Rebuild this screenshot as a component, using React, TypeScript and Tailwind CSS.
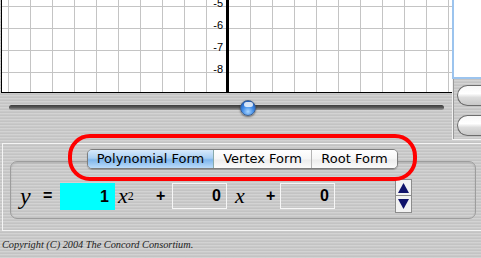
import React from "react";

const metal =
  "bg-[#c9c9c9] bg-[repeating-linear-gradient(0deg,rgba(255,255,255,0.18)_0px,rgba(255,255,255,0.18)_1px,rgba(0,0,0,0.03)_1px,rgba(0,0,0,0.03)_2px,transparent_2px,transparent_3px)]";

function Graph() {
  const vLines = Array.from({ length: 21 }, (_, i) => 6 + i * 22);
  const hLines = [6, 28, 50, 72];
  const labels = ["-5", "-6", "-7", "-8"];
  return (
    <svg width="450" height="92" className="block bg-white">
      {vLines.map((x) => (
        <line key={x} x1={x + 0.5} y1={0} x2={x + 0.5} y2={92} stroke="#c4c4c4" />
      ))}
      {hLines.map((y) => (
        <line key={y} x1={0} y1={y + 0.5} x2={450} y2={y + 0.5} stroke="#c4c4c4" />
      ))}
      <rect x={224} y={0} width={3} height={92} fill="#000" />
      {labels.map((t, i) => (
        <text
          key={t}
          x={221}
          y={hLines[i] + 1}
          textAnchor="end"
          fontFamily="Liberation Sans, Arial, sans-serif"
          fontSize="11"
          fill="#000"
        >
          {t}
        </text>
      ))}
    </svg>
  );
}

function Segmented() {
  const seg = "flex items-center justify-center h-full text-[13px] text-black";
  return (
    <div className="flex h-[20px] w-[311px] rounded-[5px] border border-[#7d7d7d] overflow-hidden shadow-[0_1px_1px_rgba(0,0,0,0.25)] [font-family:'DejaVu_Sans',sans-serif]">
      <div className={`${seg} w-[126px] bg-[linear-gradient(180deg,#d7e9fb_0%,#a9cff3_45%,#7fb6ec_55%,#bcdcfa_100%)] border-r border-[#8aa]`}>
        Polynomial Form
      </div>
      <div className={`${seg} w-[98px] bg-[linear-gradient(180deg,#ffffff_0%,#f6f6f6_50%,#ececec_55%,#fbfbfb_100%)] border-r border-[#b5b5b5]`}>
        Vertex Form
      </div>
      <div className={`${seg} flex-1 bg-[linear-gradient(180deg,#ffffff_0%,#f6f6f6_50%,#ececec_55%,#fbfbfb_100%)]`}>
        Root Form
      </div>
    </div>
  );
}

export default function App() {
  const num = "[font-family:'Liberation_Sans',Arial,sans-serif] font-bold text-[16px]";
  const varFont = "[font-family:'Liberation_Serif','Times_New_Roman',serif] italic";
  return (
    <div className={`relative w-[481px] h-[258px] overflow-hidden ${metal}`}>
      {/* top: graph + slider, right side panel */}
      <div className="flex h-[142px]">
        <div className="w-[452px] flex flex-col pl-[1px]">
          <div className="border-l border-r border-b border-black">
            <Graph />
          </div>
          <div className="relative flex-1">
            <div className="mt-[12px] ml-[8px] w-[435px] h-[5px] rounded-full bg-[linear-gradient(180deg,#3c3c3c_0%,#5a5a5a_50%,#9a9a9a_100%)]" />
            <div className="absolute left-[239px] top-[7px] w-[16px] h-[16px] rounded-full border border-[#3d5f8e] bg-[radial-gradient(circle_at_50%_75%,#a9d6ff_0%,#3f8ae6_45%,#1f5fc0_80%)] shadow-[0_1px_2px_rgba(0,0,0,0.5)]">
              <div className="mx-auto mt-[1px] w-[9px] h-[5px] rounded-full bg-white/80" />
            </div>
          </div>
        </div>
        <div className="flex-1 flex flex-col">
          <div className="h-[79px] bg-white border-l-2 border-b-2 border-[#9cc4ee]" />
          <div className="h-[61px] border-l border-b border-[#f2f2f2] shadow-[inset_1px_0_0_#9a9a9a] flex flex-col gap-[9px] pt-[6px] pl-[4px]">
            <div className="h-[21px] rounded-l-full border border-r-0 border-[#6c6c6c] bg-[linear-gradient(180deg,#f7f7f7_0%,#ffffff_40%,#dcdcdc_60%,#c8c8c8_100%)]" />
            <div className="h-[21px] rounded-l-full border border-r-0 border-[#6c6c6c] bg-[linear-gradient(180deg,#f7f7f7_0%,#ffffff_40%,#dcdcdc_60%,#c8c8c8_100%)]" />
          </div>
        </div>
      </div>

      {/* equation box */}
      <div className="ml-[2px] mt-[1px] h-[88px] border-t border-l border-b border-[#f4f4f4] pt-[17px] pl-[7px] pr-[5px]">
        <div className="h-[58px] rounded-[7px] border border-[#9d9d9d] shadow-[inset_0_1px_2px_rgba(0,0,0,0.12)] flex items-start pl-[9px] pt-[21px]">
          <span className={`${varFont} text-[24px] w-[23px] leading-[26px]`}>y</span>
          <span className={`${num} w-[17px] leading-[26px]`}>=</span>
          <div className={`w-[55px] h-[27px] bg-[#00ffff] flex items-center justify-end pr-[6px] ${num}`}>1</div>
          <span className={`${varFont} text-[22px] leading-[26px] ml-[3px] w-[38px]`}>
            x<sup className="text-[12px] not-italic relative -top-[3px]">2</sup>
          </span>
          <span className={`${num} w-[16px] leading-[26px]`}>+</span>
          <div className={`w-[55px] h-[26px] border border-[#f6f6f6] flex items-center justify-end pr-[5px] ${num}`}>0</div>
          <span className={`${varFont} text-[22px] leading-[26px] ml-[8px] w-[31px]`}>x</span>
          <span className={`${num} w-[14px] leading-[26px]`}>+</span>
          <div className={`w-[55px] h-[26px] border border-[#f6f6f6] flex items-center justify-end pr-[5px] ${num}`}>0</div>
          <div className="ml-[60px] -mt-[4px] flex flex-col">
            <div className="w-[17px] h-[17px] border border-[#8c8c8c] bg-[#f2f2f2] flex items-center justify-center">
              <svg width="11" height="10" viewBox="0 0 11 10">
                <polygon points="5.5,0 11,10 0,10" fill="#10136b" />
              </svg>
            </div>
            <div className="w-[17px] h-[17px] border border-[#8c8c8c] border-t-0 bg-[#f2f2f2] flex items-center justify-center">
              <svg width="11" height="10" viewBox="0 0 11 10">
                <polygon points="0,0 11,0 5.5,10" fill="#10136b" />
              </svg>
            </div>
          </div>
        </div>
      </div>

      <div className="pl-[2px] pt-[6px] text-[10.3px] text-[#222] [font-family:'Liberation_Serif','Times_New_Roman',serif] italic">
        Copyright (C) 2004 The Concord Consortium.
      </div>

      {/* form selector over the panel edge */}
      <div className="absolute left-[87px] top-[149px]">
        <Segmented />
      </div>
      {/* red highlight drawn on the screenshot */}
      <div className="absolute left-[68px] top-[134px] w-[349px] h-[47px] rounded-[22px] border-[4px] border-[#ff0000]" />
    </div>
  );
}
